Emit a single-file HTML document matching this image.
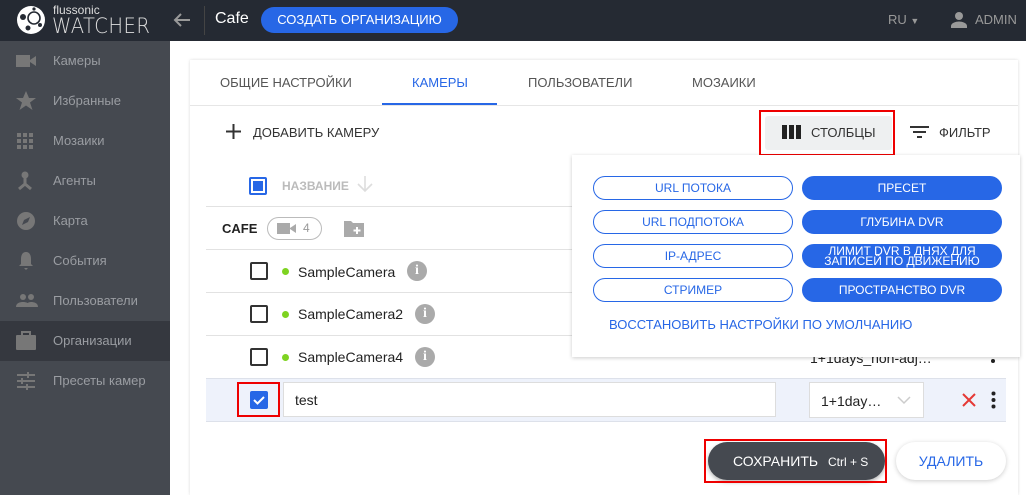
<!DOCTYPE html>
<html><head><meta charset="utf-8"><style>
*{box-sizing:border-box;margin:0;padding:0}
body{width:1026px;height:495px;overflow:hidden;font-family:"Liberation Sans",Arial,sans-serif;background:#fff;position:relative}
.a{position:absolute}
.top{left:0;top:0;width:1026px;height:41px;background:#252a33}
.side{left:0;top:41px;width:170px;height:454px;background:#454950}
.si{position:absolute;left:0;width:170px;height:40px;color:#9a9da2;font-size:13px;line-height:40px;padding-left:53px}
.si svg{position:absolute;left:16px;top:10px}
.card{left:190px;top:60px;width:828px;height:435px;background:#fff;box-shadow:0 0 3px rgba(0,0,0,.15)}
.tab{position:absolute;top:60px;height:46px;line-height:46px;font-size:13px;color:#555}
.line{position:absolute;left:206px;width:800px;height:1px;background:#e2e2e2}
.cb{position:absolute;width:18px;height:18px;border:2px solid #333;border-radius:2px}
.dot{position:absolute;width:7px;height:7px;border-radius:50%;background:#7ed321}
.nm{position:absolute;font-size:14px;color:#222}
.inf{position:absolute;width:20px;height:20px;border-radius:50%;background:#aaa;color:#fff;font-weight:bold;font-size:14px;text-align:center;line-height:20px;font-family:"Liberation Serif",serif}
.pop{left:572px;top:155px;width:448px;height:202px;background:#fff;box-shadow:0 1px 4px rgba(0,0,0,.2)}
.pb{position:absolute;width:200px;height:24px;border-radius:12px;font-size:12px;text-align:center;line-height:22px;border:1px solid #2767e6}
.o{color:#2767e6;background:#fff}
.f{color:#fff;background:#2767e6}
.red{position:absolute;border:2px solid #e00}
</style></head><body>
<div class="a top"></div>
<svg class="a" style="left:16px;top:5px" width="30" height="30" viewBox="0 0 30 30"><circle cx="15" cy="15" r="14" fill="#fff"/><circle cx="18" cy="13" r="6" fill="none" stroke="#252a33" stroke-width="1.6"/><circle cx="7" cy="12" r="3" fill="#252a33"/><circle cx="12" cy="23" r="2.5" fill="#252a33"/><circle cx="24" cy="20" r="2" fill="#252a33"/><circle cx="18" cy="4" r="1.6" fill="#252a33"/></svg>
<div class="a" style="left:53px;top:3px;color:#ddd;font-size:12px">flussonic</div>
<div class="a" style="left:52px;top:14px;color:#ddd;font-size:21px;letter-spacing:0.5px;font-family:'DejaVu Sans',sans-serif;font-weight:200;transform:scaleX(0.93);transform-origin:left">WATCHER</div>
<svg class="a" style="left:173px;top:12px" width="18" height="16"><path d="M17 8H2M8 2L2 8l6 6" stroke="#999" stroke-width="2" fill="none"/></svg>
<div class="a" style="left:204px;top:6px;width:1px;height:29px;background:#444"></div>
<div class="a" style="left:215px;top:10px;color:#fff;font-size:16px">Cafe</div>
<div class="a" style="left:261px;top:7px;width:197px;height:26px;border-radius:13px;background:#2767e6;color:#fff;font-size:13px;line-height:26px;text-align:center">СОЗДАТЬ ОРГАНИЗАЦИЮ</div>
<div class="a" style="left:888px;top:12px;color:#999;font-size:13px">RU <span style="font-size:9px">▼</span></div>
<svg class="a" style="left:950px;top:11px" width="18" height="18" viewBox="0 0 18 18"><circle cx="9" cy="5" r="4" fill="#999"/><path d="M1 17v-2c0-3 5-4.5 8-4.5s8 1.5 8 4.5v2z" fill="#999"/></svg>
<div class="a" style="left:975px;top:12px;color:#999;font-size:13px">ADMIN</div>

<div class="a side">
<div class="si" style="top:0"><svg width="22" height="20"><rect x="0" y="4" width="14" height="12" fill="#777"/><path d="M14 9l6-4v10l-6-4z" fill="#777"/></svg>Камеры</div>
<div class="si" style="top:40px"><svg width="22" height="20"><path d="M10 0l3 7h7l-6 4.5 2.5 7.5L10 14.5 3.5 19 6 11.5 0 7h7z" fill="#777"/></svg>Избранные</div>
<div class="si" style="top:80px"><svg width="22" height="20"><g fill="#777"><rect x="1" y="2" width="4" height="4"/><rect x="7" y="2" width="4" height="4"/><rect x="13" y="2" width="4" height="4"/><rect x="1" y="8" width="4" height="4"/><rect x="7" y="8" width="4" height="4"/><rect x="13" y="8" width="4" height="4"/><rect x="1" y="14" width="4" height="4"/><rect x="7" y="14" width="4" height="4"/><rect x="13" y="14" width="4" height="4"/></g></svg>Мозаики</div>
<div class="si" style="top:120px"><svg width="22" height="20"><circle cx="9" cy="4" r="3.5" fill="#777"/><path d="M9 7v6M9 13l-6 5M9 13l6 5" stroke="#777" stroke-width="3"/></svg>Агенты</div>
<div class="si" style="top:160px"><svg width="22" height="20"><circle cx="10" cy="10" r="9" fill="#777"/><path d="M14 6l-6 3-2 5 6-3z" fill="#454950"/></svg>Карта</div>
<div class="si" style="top:200px"><svg width="22" height="20"><path d="M10 1c-4 0-5 4-5 7v5l-2 2h14l-2-2V8c0-3-1-7-5-7zM8 17h4l-2 2z" fill="#777"/></svg>События</div>
<div class="si" style="top:240px"><svg width="24" height="20"><circle cx="7" cy="6" r="3" fill="#777"/><circle cx="15" cy="6" r="3" fill="#777"/><path d="M0 16c0-4 4-5 7-5s7 1 7 5zM10 16c0-3 2-5 5-5s7 1 7 5z" fill="#777"/></svg>Пользователи</div>
<div class="si" style="top:280px;background:#35383f"><svg width="22" height="20"><rect x="0" y="4" width="20" height="15" rx="1" fill="#777"/><rect x="6" y="1" width="8" height="4" fill="none" stroke="#777" stroke-width="2"/></svg>Организации</div>
<div class="si" style="top:320px"><svg width="22" height="20"><path d="M1 4h18M1 10h18M1 16h18" stroke="#777" stroke-width="2"/><path d="M12 1v6M6 7v6M11 13v6" stroke="#777" stroke-width="2"/></svg>Пресеты камер</div>
</div>

<div class="a card"></div>
<div class="tab" style="left:220px">ОБЩИЕ НАСТРОЙКИ</div>
<div class="tab" style="left:412px;color:#2767e6">КАМЕРЫ</div>
<div class="tab" style="left:528px">ПОЛЬЗОВАТЕЛИ</div>
<div class="tab" style="left:692px">МОЗАИКИ</div>
<div class="a" style="left:382px;top:103px;width:115px;height:2px;background:#2767e6"></div>
<div class="a" style="left:190px;top:105px;width:828px;height:1px;background:#e6e6e6"></div>

<svg class="a" style="left:226px;top:124px" width="15" height="15"><path d="M7.5 0v15M0 7.5h15" stroke="#333" stroke-width="2"/></svg>
<div class="a" style="left:253px;top:125px;font-size:13px;color:#333">ДОБАВИТЬ КАМЕРУ</div>
<div class="a" style="left:765px;top:116px;width:127px;height:34px;background:#eef0f1;border-radius:3px"></div>
<svg class="a" style="left:782px;top:125px" width="20" height="14"><rect x="0" y="0" width="5" height="14" fill="#222"/><rect x="7" y="0" width="5" height="14" fill="#222"/><rect x="14" y="0" width="5" height="14" fill="#222"/></svg>
<div class="a" style="left:811px;top:125px;font-size:13px;color:#333">СТОЛБЦЫ</div>
<div class="red" style="left:759px;top:110px;width:136px;height:46px"></div>
<svg class="a" style="left:910px;top:125px" width="20" height="14"><path d="M0 2h19M3 7h13M7 12h5" stroke="#333" stroke-width="2"/></svg>
<div class="a" style="left:939px;top:125px;font-size:13px;color:#333">ФИЛЬТР</div>

<div class="a" style="left:249px;top:177px;width:18px;height:18px;border:2px solid #2767e6;border-radius:2px"><div style="margin:2px;width:10px;height:10px;background:#2767e6"></div></div>
<div class="a" style="left:282px;top:179px;font-size:12px;font-weight:bold;color:#bbb">НАЗВАНИЕ</div>
<svg class="a" style="left:357px;top:176px" width="16" height="17"><path d="M8 0v15M1 8l7 7 7-7" stroke="#ddd" stroke-width="1.6" fill="none"/></svg>
<div class="line" style="top:206px"></div>
<div class="a" style="left:222px;top:221px;font-size:13px;font-weight:bold;color:#222">CAFE</div>
<div class="a" style="left:267px;top:217px;width:55px;height:23px;border:1px solid #bbb;border-radius:12px"></div>
<svg class="a" style="left:277px;top:222px" width="20" height="13"><rect x="0" y="1" width="13" height="11" fill="#aaa"/><path d="M13 6l6-4v9l-6-4z" fill="#aaa"/></svg>
<div class="a" style="left:303px;top:221px;font-size:12px;color:#999">4</div>
<svg class="a" style="left:344px;top:219px" width="21" height="18"><path d="M0 2h7l2 2h11v14H0z" fill="#aaa"/><path d="M13 8v7M9.5 11.5h7" stroke="#fff" stroke-width="2"/></svg>
<div class="line" style="top:249px"></div>
<div class="cb" style="left:250px;top:262px"></div><div class="dot" style="left:282px;top:268px"></div><div class="nm" style="left:298px;top:264px">SampleCamera</div><div class="inf" style="left:407px;top:261px">i</div>
<div class="line" style="top:292px"></div>
<div class="cb" style="left:250px;top:305px"></div><div class="dot" style="left:282px;top:311px"></div><div class="nm" style="left:298px;top:306px">SampleCamera2</div><div class="inf" style="left:415px;top:304px">i</div>
<div class="line" style="top:335px"></div>
<div class="cb" style="left:250px;top:348px"></div><div class="dot" style="left:282px;top:354px"></div><div class="nm" style="left:298px;top:349px">SampleCamera4</div><div class="inf" style="left:415px;top:347px">i</div>
<div class="a" style="left:810px;top:350px;font-size:14px;color:#222">1+1days_non-adj…</div>
<div class="a" style="left:991px;top:359px;width:4px;height:4px;border-radius:50%;background:#222"></div>
<div class="line" style="top:378px;background:#dde1ea"></div>
<div class="a" style="left:206px;top:379px;width:800px;height:42px;background:#eef2fb"></div>
<div class="line" style="top:421px;background:#dde1ea"></div>
<div class="a" style="left:250px;top:391px;width:18px;height:18px;background:#2767e6;border-radius:2px"><svg width="18" height="18"><path d="M4 9l3.5 3.5L14 6" stroke="#fff" stroke-width="2" fill="none"/></svg></div>
<div class="red" style="left:237px;top:382px;width:43px;height:35px"></div>
<div class="a" style="left:283px;top:382px;width:493px;height:35px;background:#fff;border:1px solid #ddd"></div>
<div class="a" style="left:295px;top:392px;font-size:14px;color:#222">test</div>
<div class="a" style="left:809px;top:382px;width:115px;height:36px;background:#fff;border:1px solid #ddd"></div>
<div class="a" style="left:821px;top:393px;font-size:14px;color:#222">1+1day…</div>
<svg class="a" style="left:897px;top:396px" width="14" height="9"><path d="M1 1l6 6 6-6" stroke="#ccc" stroke-width="1.5" fill="none"/></svg>
<svg class="a" style="left:962px;top:393px" width="14" height="14"><path d="M1 1l12 12M13 1L1 13" stroke="#e53935" stroke-width="2"/></svg>
<svg class="a" style="left:991px;top:391px" width="5" height="18"><circle cx="2.5" cy="2.5" r="2" fill="#222"/><circle cx="2.5" cy="9" r="2" fill="#222"/><circle cx="2.5" cy="15.5" r="2" fill="#222"/></svg>

<div class="a" style="left:708px;top:442px;width:177px;height:38px;border-radius:19px;background:#454950;box-shadow:0 2px 4px rgba(0,0,0,.3);color:#fff;font-size:14px;line-height:38px;padding-left:25px">СОХРАНИТЬ <span style="font-size:12px;margin-left:6px">Ctrl + S</span></div>
<div class="red" style="left:704px;top:439px;width:183px;height:44px"></div>
<div class="a" style="left:896px;top:442px;width:110px;height:38px;border-radius:19px;background:#fff;box-shadow:0 1px 5px rgba(0,0,0,.2);color:#2767e6;font-size:14px;line-height:38px;text-align:center">УДАЛИТЬ</div>

<div class="a pop">
<div class="pb o" style="left:21px;top:21px">URL ПОТОКА</div>
<div class="pb f" style="left:230px;top:21px">ПРЕСЕТ</div>
<div class="pb o" style="left:21px;top:55px">URL ПОДПОТОКА</div>
<div class="pb f" style="left:230px;top:55px">ГЛУБИНА DVR</div>
<div class="pb o" style="left:21px;top:89px">IP-АДРЕС</div>
<div class="pb f" style="left:230px;top:89px;line-height:10px;padding-top:1px">ЛИМИТ DVR В ДНЯХ ДЛЯ<br>ЗАПИСЕЙ ПО ДВИЖЕНИЮ</div>
<div class="pb o" style="left:21px;top:123px">СТРИМЕР</div>
<div class="pb f" style="left:230px;top:123px">ПРОСТРАНСТВО DVR</div>
<div style="position:absolute;left:37px;top:162px;font-size:13px;color:#2767e6">ВОССТАНОВИТЬ НАСТРОЙКИ ПО УМОЛЧАНИЮ</div>
</div>
</body></html>
